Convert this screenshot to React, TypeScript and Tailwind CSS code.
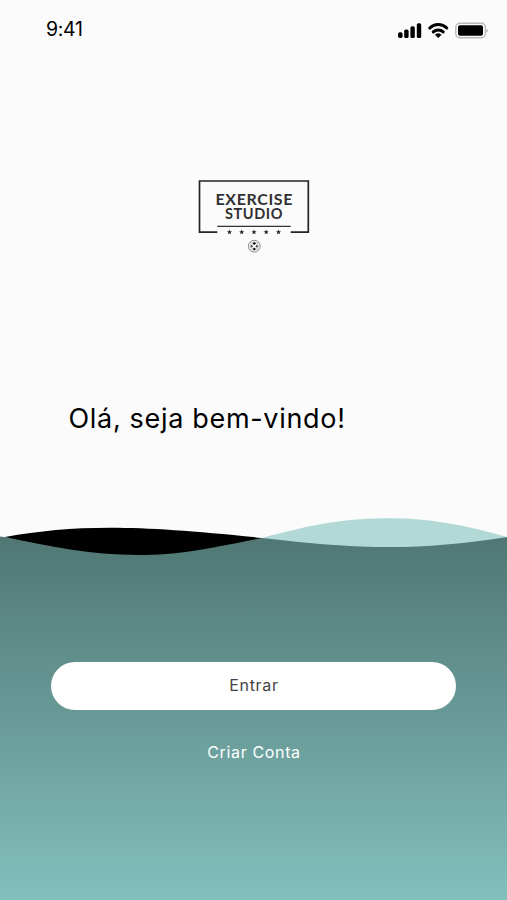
import React from "react";

//
// Status bar
//
const StatusBar: React.FC = () => (
  <header className="flex h-14 items-center justify-between pl-[46px] pr-[18px]">
    <span className="pt-px text-[19.5px] leading-5 tracking-[-0.35px] text-black">
      9:41
    </span>
    <svg
      className="mt-[3px] h-[18px] w-[92px]"
      viewBox="397 21 92 18"
      aria-hidden="true"
    >
      <g fill="#000">
        <rect x="398" y="32.3" width="4.6" height="5.7" rx="1.8" />
        <rect x="404.2" y="29.6" width="4.4" height="8.4" rx="1.6" />
        <rect x="410.4" y="26.3" width="4.4" height="11.7" rx="1.6" />
        <rect x="416.8" y="23.2" width="4.4" height="14.8" rx="1.6" />
      </g>
      <g fill="none" stroke="#000" strokeWidth="3.1" strokeLinecap="round">
        <path d="M429.8 28 C434.4 23.300 442.100 23.300 446.700 28" />
        <path d="M433.300 31.900 C436 29.300 440.500 29.300 443.200 31.900" />
      </g>
      <path
        d="M435.300 34.700 Q438.250 32.500 441.200 34.700 L438.250 37.800 Z"
        fill="#000"
        stroke="#000"
        strokeWidth=".6"
        strokeLinejoin="round"
      />
      <rect
        x="455.800"
        y="23.200"
        width="29.600"
        height="14.600"
        rx="4"
        fill="#fbfbfb"
        stroke="#b9b9b9"
        strokeWidth="1.400"
      />
      <rect x="458" y="25.300" width="25" height="10.400" rx="2" fill="#000" />
      <path d="M486.700 28 Q488.500 30.500 486.700 33 Z" fill="#999" />
    </svg>
  </header>
);

const stars = [229.5, 241.7, 254, 266.2, 278.5];

//
// Studio logo
//
const Logo: React.FC = () => (
  <svg
    className="h-[76px] w-[112px]"
    viewBox="198 179 112 76"
    role="img"
    aria-label="Exercise Studio"
  >
    <path
      d="M217.300 232.200 H199.500 V181 H308.300 V232.200 H290.700"
      fill="none"
      stroke="#252525"
      strokeWidth="1.700"
    />
    <path d="M217.300 226.300 H290.700" stroke="#333" strokeWidth="1.200" />
    <g
      className="font-[Lato,sans-serif] text-[14.5px] font-bold tracking-[0.6px]"
      fill="#303030"
      textAnchor="middle"
    >
      <text x="254.300" y="205" textLength="77.500" lengthAdjust="spacingAndGlyphs">
        EXERCISE
      </text>
      <text x="254" y="219" textLength="58" lengthAdjust="spacingAndGlyphs">
        STUDIO
      </text>
    </g>
    {stars.map((x) => (
      <path
        key={x}
        transform={`translate(${x} 232)`}
        d="M0 -2.500 L.7 -.8 2.500 -.7 1.100 .5 1.600 2.200 0 1.200 -1.600 2.200 -1.100 .5 -2.500 -.7 -.7 -.8 Z"
        fill="#252525"
      />
    ))}
    <g transform="translate(254.300 246.200)">
      <circle r="5.900" fill="none" stroke="#555" strokeWidth=".7" />
      <circle r="4" fill="none" stroke="#777" strokeWidth=".5" />
      <path
        d="M0 -4.100 L1.700 -2.700 0 -1.200 -1.700 -2.700 Z M0 4.100 L1.700 2.700 0 1.200 -1.700 2.700 Z"
        fill="#111"
      />
      <path
        d="M-3.800 0 L-2.500 -1.500 -1.200 0 -2.500 1.500 Z M3.800 0 L2.500 -1.500 1.200 0 2.500 1.500 Z"
        fill="#444"
      />
    </g>
  </svg>
);

//
// Waves between the greeting and the actions
//
const Waves: React.FC = () => (
  <svg
    className="block h-[50px] w-full"
    viewBox="0 510 507 50"
    preserveAspectRatio="none"
    aria-hidden="true"
  >
    <path d="M0 510 H507 V537 L262 538 L6 537.300 L0 536.500 Z" fill="#fbfbfb" />
    <path
      d="M5 537 C75 524.500 135 524.500 262 538 C205 549 180 555 138 555 C90 555 50 546.500 5 537 Z"
      fill="#000"
    />
    <path
      d="M262 538 C315 523 350 518.200 390 518.200 C430 518.200 465 525 507 537 C420 550.500 365 550 262 538 Z"
      fill="#b3d9d7"
    />
  </svg>
);

const App: React.FC = () => {
  return (
    <main className="flex h-[900px] w-full flex-col bg-[#fbfbfb] font-[Inter,sans-serif]">
      <StatusBar />

      <div className="flex h-[454px] flex-none flex-col pt-[123px]">
        <div className="flex justify-center">
          <Logo />
        </div>
        <h1 className="mt-36 pl-[68.500px] text-[27px] leading-10 tracking-[0.68px] text-black">
          Olá, seja bem-vindo!
        </h1>
      </div>

      <section className="flex flex-1 flex-col bg-linear-to-b from-[#507774] from-7% to-[#82c0bd]">
        <Waves />
        <div className="mt-[102px] flex flex-col px-[51px]">
          <button
            type="button"
            className="h-12 rounded-full bg-white pb-0.5 pl-px text-base tracking-[0.7px] text-[#444]"
          >
            Entrar
          </button>
          <button
            type="button"
            className="mt-[30px] self-center pl-px text-base leading-6 tracking-[0.65px] text-white"
          >
            Criar Conta
          </button>
        </div>
      </section>
    </main>
  );
};

export default App;
